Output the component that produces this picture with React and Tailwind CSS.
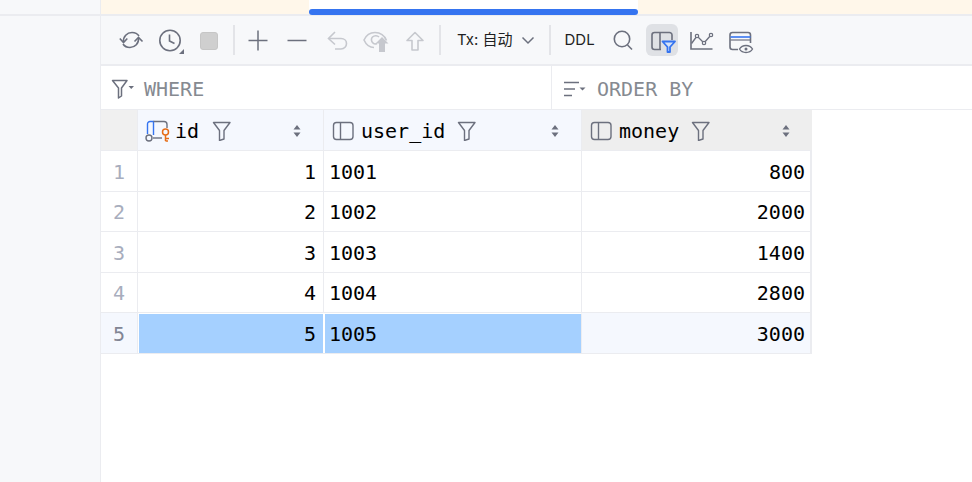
import React from 'react';

const mono = "font-['DejaVu_Sans_Mono',monospace]";

function Svg({ children, w = 32, h = 32, className = '' }) {
  return (
    <svg width={w} height={h} viewBox={`0 0 ${w} ${h}`} fill="none" className={`shrink-0 ${className}`}>
      {children}
    </svg>
  );
}

const dark = '#6c707e';
const off = '#c6c8ce';

const RefreshIcon = () => (
  <Svg>
    <g stroke={dark} strokeWidth="1.6">
      <path d="M8.5 18C8 12.5 12 8.5 17 8.5c3 0 5.5 1.2 7 3.5" />
      <path d="M4.8 14.5l3.7 4 3.8-4" />
      <path d="M23.5 14c.5 5.5-3.5 9.5-8.5 9.5-3 0-5.5-1.2-7-3.5" />
      <path d="M19.5 17.5l4-4 4 4" />
    </g>
  </Svg>
);

const HistoryIcon = () => (
  <Svg>
    <circle cx="15" cy="16.5" r="10.2" stroke={dark} strokeWidth="1.6" />
    <path d="M14.5 10.5v6.5l5 2.5" stroke={dark} strokeWidth="1.6" />
    <path d="M29 25v5h-5z" fill={dark} />
  </Svg>
);

const StopIcon = () => (
  <Svg>
    <rect x="7.5" y="8.5" width="17" height="17" rx="2.5" fill="#cfcfcf" stroke="#c6c6c6" />
  </Svg>
);

const PlusIcon = () => (
  <Svg>
    <path d="M16 6.5v20M6.5 16.5h19" stroke={dark} strokeWidth="1.5" />
  </Svg>
);

const MinusIcon = () => (
  <Svg>
    <path d="M6.5 16.5h19" stroke={dark} strokeWidth="1.5" />
  </Svg>
);

const UndoIcon = () => (
  <Svg>
    <path d="M14 8l-6.5 6.5 6.5 6" stroke={off} strokeWidth="1.6" />
    <path d="M8 14.5h12c3.5 0 5.500 2.300 5.500 5s-2 5.500-5.500 5.500h-6" stroke={off} strokeWidth="1.6" />
  </Svg>
);

const EyeUpIcon = () => (
  <Svg>
    <path d="M14 23.500c-4.500 0-8-3-10-7.500 2-4.500 6-7.500 11-7.500 5.500 0 9.500 3 11.500 8" stroke={off} strokeWidth="1.6" />
    <path d="M17 19.500c-1 .5-3 .5-4-.5-2-1.500-2-4.500-.5-6 2-2 5-1.500 6.500 0" stroke={off} strokeWidth="1.6" />
    <path d="M22 13l6.500 6.500H25V28h-6v-8.500h-3.500z" fill={off} />
  </Svg>
);

const UpIcon = () => (
  <Svg>
    <path d="M16 8.500l-8 8h5v9.500h6v-9.500h5z" stroke={off} strokeWidth="1.6" strokeLinejoin="round" />
  </Svg>
);

const Chevron = () => (
  <Svg w={16} h={16}>
    <path d="M2.500 5.500L8 11l5.500-5.500" stroke={dark} strokeWidth="1.500" />
  </Svg>
);

const SearchIcon = () => (
  <Svg>
    <circle cx="15" cy="15" r="7.700" stroke={dark} strokeWidth="1.600" />
    <path d="M20.500 21l4.500 4.500" stroke={dark} strokeWidth="1.600" />
  </Svg>
);

const ViewFilterIcon = () => (
  <Svg>
    <path d="M15 25.500H8.500A2.500 2.500 0 0 1 6 23V11A2.500 2.500 0 0 1 8.500 8.500h15A2.500 2.500 0 0 1 26 11v5" stroke={dark} strokeWidth="1.600" />
    <path d="M14 8.500v17" stroke={dark} strokeWidth="1.600" />
    <path d="M16.500 17.500h12.500l-5 5.500v5h-2.500v-5z" stroke="#3574f0" strokeWidth="1.800" strokeLinejoin="round" fill="#d5e2f8" />
  </Svg>
);

const ChartIcon = () => (
  <Svg>
    <path d="M6 8v17h21.500" stroke={dark} strokeWidth="1.600" />
    <path d="M6.500 19.500l5.500-7.500 7 7 7-8" stroke={dark} strokeWidth="1.400" />
    <circle cx="12" cy="12" r="1.700" fill="#f7f8fa" stroke={dark} strokeWidth="1.200" />
    <circle cx="19" cy="19" r="1.700" fill="#f7f8fa" stroke={dark} strokeWidth="1.200" />
    <circle cx="26" cy="11" r="1.700" fill="#f7f8fa" stroke={dark} strokeWidth="1.200" />
  </Svg>
);

const DdlViewIcon = () => (
  <Svg>
    <path d="M14 25.500H8.500A2.500 2.500 0 0 1 6 23V11A2.500 2.500 0 0 1 8.500 8.500h15.500A2.500 2.500 0 0 1 26.500 11V19" stroke={dark} strokeWidth="1.600" />
    <path d="M6.500 13h20" stroke="#3574f0" strokeWidth="1.600" />
    <path d="M6.500 16h20" stroke={dark} strokeWidth="1.200" />
    <path d="M15.500 25c1.500-2.500 4-3.500 6.500-3.500s5 1 6.500 3.500c-1.500 2.500-4 3.500-6.500 3.500s-5-1-6.500-3.500z" fill="#f7f8fa" stroke={dark} strokeWidth="1.400" />
    <circle cx="22" cy="25" r="1.500" fill={dark} />
  </Svg>
);

const FunnelCaretIcon = () => (
  <Svg w={24} h={24}>
    <path d="M1.500 3.500h14.500l-5.500 7.500v8l-3 2v-10z" stroke={dark} strokeWidth="1.500" strokeLinejoin="round" />
    <path d="M17.500 9h5.500l-2.750 3z" fill={dark} />
  </Svg>
);

const SortCaretIcon = () => (
  <Svg w={24} h={24}>
    <path d="M1 5.500h15M1 12h11M1 18.500h8" stroke={dark} strokeWidth="1.500" />
    <path d="M16.500 10.500h6l-3 3z" fill={dark} />
  </Svg>
);

const ColFunnel = () => (
  <Svg w={20} h={20}>
    <path d="M1.500 1.500h16.500l-6 8v8.500l-4.500 1.500v-10z" stroke={dark} strokeWidth="1.400" strokeLinejoin="round" />
  </Svg>
);

const Sort = () => (
  <Svg w={10} h={14}>
    <path d="M5 1l3.500 4.500h-7zM5 13l3.500-4.500h-7z" fill={dark} />
  </Svg>
);

const ColumnIcon = () => (
  <Svg w={22} h={20}>
    <rect x="1.500" y="1.500" width="19.500" height="17" rx="3" stroke={dark} strokeWidth="1.400" />
    <path d="M8.500 1.500v17" stroke={dark} strokeWidth="1.400" />
  </Svg>
);

const KeyColumnIcon = () => (
  <Svg w={26} h={22}>
    <path d="M2.500 14V4A2.500 2.500 0 0 1 5 1.500h3.500V15" stroke="#3574f0" strokeWidth="1.400" />
    <path d="M8.500 1.500H19A3 3 0 0 1 22 4.500V8" stroke={dark} strokeWidth="1.400" />
    <circle cx="4" cy="18" r="3" stroke={dark} strokeWidth="1.400" />
    <path d="M8 18h9" stroke={dark} strokeWidth="1.400" />
    <circle cx="20.500" cy="12" r="3" stroke="#e66d17" strokeWidth="1.500" />
    <path d="M20.500 15v6M20.500 18.500h3.500M20.500 21h2.500" stroke="#e66d17" strokeWidth="1.500" />
  </Svg>
);

function Btn({ children, className = '' }) {
  return <div className={`w-8 h-8 flex items-center justify-center shrink-0 ${className}`}>{children}</div>;
}

const Sep = ({ className = '' }) => <div className={`w-[2px] h-[30px] bg-[#e3e4e8] shrink-0 ${className}`} />;

const columns = [
  { name: 'id', width: 'w-[186px]', icon: <KeyColumnIcon />, textGap: 'ml-[4px]', filterGap: 'ml-[13px]', head: 'bg-[#f5f8fe]', pad: 'pl-[7px]' },
  { name: 'user_id', width: 'w-[258px]', icon: <ColumnIcon />, textGap: 'ml-[7px]', filterGap: 'ml-[12px]', head: 'bg-[#f5f8fe]', pad: 'pl-[8px]' },
  { name: 'money', width: 'w-[230px]', icon: <ColumnIcon />, textGap: 'ml-[7px]', filterGap: 'ml-[12px]', head: 'bg-[#eeeeee]', pad: 'pl-[8px]' },
];

const rows = [
  [1, 1001, 800],
  [2, 1002, 2000],
  [3, 1003, 1400],
  [4, 1004, 2800],
  [5, 1005, 3000],
];

export default function App() {
  return (
    <div className="w-[972px] h-[482px] overflow-hidden flex bg-white">
      <div className="w-[101px] h-full shrink-0 flex flex-col bg-[#f7f8fa] border-r border-[#ebecf0]">
        <div className="h-[16px] border-b-2 border-[#ebecf0] shrink-0" />
      </div>

      <div className="flex-1 flex flex-col min-w-0">
        {/* scroll strip */}
        <div className="h-[16px] shrink-0 flex bg-[#fff7ea] border-b-2 border-[#ebecf0]">
          <div className="w-[208px] shrink-0" />
          <div className="w-[329px] shrink-0 bg-white flex items-end">
            <div className="relative top-[1px] w-full h-[6px] bg-[#3574f0] rounded-[3px]" />
          </div>
        </div>

        {/* toolbar */}
        <div className="h-[50px] shrink-0 flex items-center bg-[#f7f8fa] border-b-2 border-[#ebecf0] pl-[14px]">
          <Btn><RefreshIcon /></Btn>
          <Btn className="ml-2"><HistoryIcon /></Btn>
          <Btn className="ml-[6px]"><StopIcon /></Btn>
          <Sep className="ml-[8px]" />
          <Btn className="ml-[7px]"><PlusIcon /></Btn>
          <Btn className="ml-[7px]"><MinusIcon /></Btn>
          <Btn className="ml-[8px]"><UndoIcon /></Btn>
          <Btn className="ml-[7px]"><EyeUpIcon /></Btn>
          <Btn className="ml-[7px]"><UpIcon /></Btn>
          <Sep className="ml-[8px]" />
          <span className="ml-[16px] text-[15px] text-[#1e1f22] whitespace-nowrap font-['Inter','Noto_Sans_CJK_SC',sans-serif]">Tx: 自动</span>
          <span className="ml-[8px]"><Chevron /></span>
          <Sep className="ml-[13px]" />
          <span className="ml-[13px] text-[15px] text-[#1e1f22] font-['Inter',sans-serif]">DDL</span>
          <Btn className="ml-[12px]"><SearchIcon /></Btn>
          <Btn className="ml-[7px] bg-[#dfe1e5] rounded-[6px]"><ViewFilterIcon /></Btn>
          <Btn className="ml-[7px]"><ChartIcon /></Btn>
          <Btn className="ml-[7px]"><DdlViewIcon /></Btn>
        </div>

        {/* where / order by */}
        <div className="h-[44px] shrink-0 flex border-b border-[#ebecf0]">
          <div className={`w-[451px] shrink-0 flex items-center pl-[10px] pt-[3px] border-r border-[#ebecf0] ${mono} text-[20px] text-[#868a91]`}>
            <FunnelCaretIcon />
            <span className="ml-[9px]">WHERE</span>
          </div>
          <div className={`flex-1 flex items-center pl-[11px] pt-[3px] ${mono} text-[20px] text-[#868a91]`}>
            <SortCaretIcon />
            <span className="ml-[10px]">ORDER BY</span>
          </div>
        </div>

        {/* result table */}
        <div className={`w-[711px] border-r-2 border-[#ebecf0] ${mono} text-[20px] text-black`}>
          <div className="flex h-[41px] border-b border-[#ebecf0]">
            <div className="w-[37px] shrink-0 bg-[#f0f0f0] border-r border-[#ebecf0]" />
            {columns.map((col) => (
              <div key={col.name} className={`${col.width} shrink-0 flex items-center pt-[2px] border-r border-[#ebecf0] last:border-r-0 ${col.head} ${col.pad}`}>
                {col.icon}
                <span className={col.textGap}>{col.name}</span>
                <span className={col.filterGap}><ColFunnel /></span>
                <span className="ml-auto mr-[21px]"><Sort /></span>
              </div>
            ))}
          </div>
          {rows.map(([id, userId, money], i) => {
            const selected = i === 4;
            return (
              <div key={id} className="flex h-[40.5px] border-b border-[#ebecf0]">
                <div className={`w-[37px] shrink-0 flex items-center justify-center pt-[2px] border-r border-[#ebecf0] ${selected ? 'bg-[#f5f8fe] text-[#818594]' : 'text-[#a8adbd]'}`}>
                  {id}
                </div>
                <div className={`w-[186px] shrink-0 flex items-center justify-end pt-[2px] pr-[7px] ${selected ? 'bg-[#a5d0ff] border border-b-0 border-white' : 'border-r border-[#ebecf0]'}`}>
                  {id}
                </div>
                <div className={`w-[258px] shrink-0 flex items-center pt-[2px] border-r border-[#ebecf0] ${selected ? 'pl-[4px] bg-[#a5d0ff] border-l-white border-t-white border-l border-t' : 'pl-[5px]'}`}>
                  {userId}
                </div>
                <div className={`w-[228px] shrink-0 flex items-center justify-end pt-[2px] pr-[5px] ${selected ? 'bg-[#f5f8fe]' : ''}`}>
                  {money}
                </div>
              </div>
            );
          })}
        </div>
      </div>
    </div>
  );
}
